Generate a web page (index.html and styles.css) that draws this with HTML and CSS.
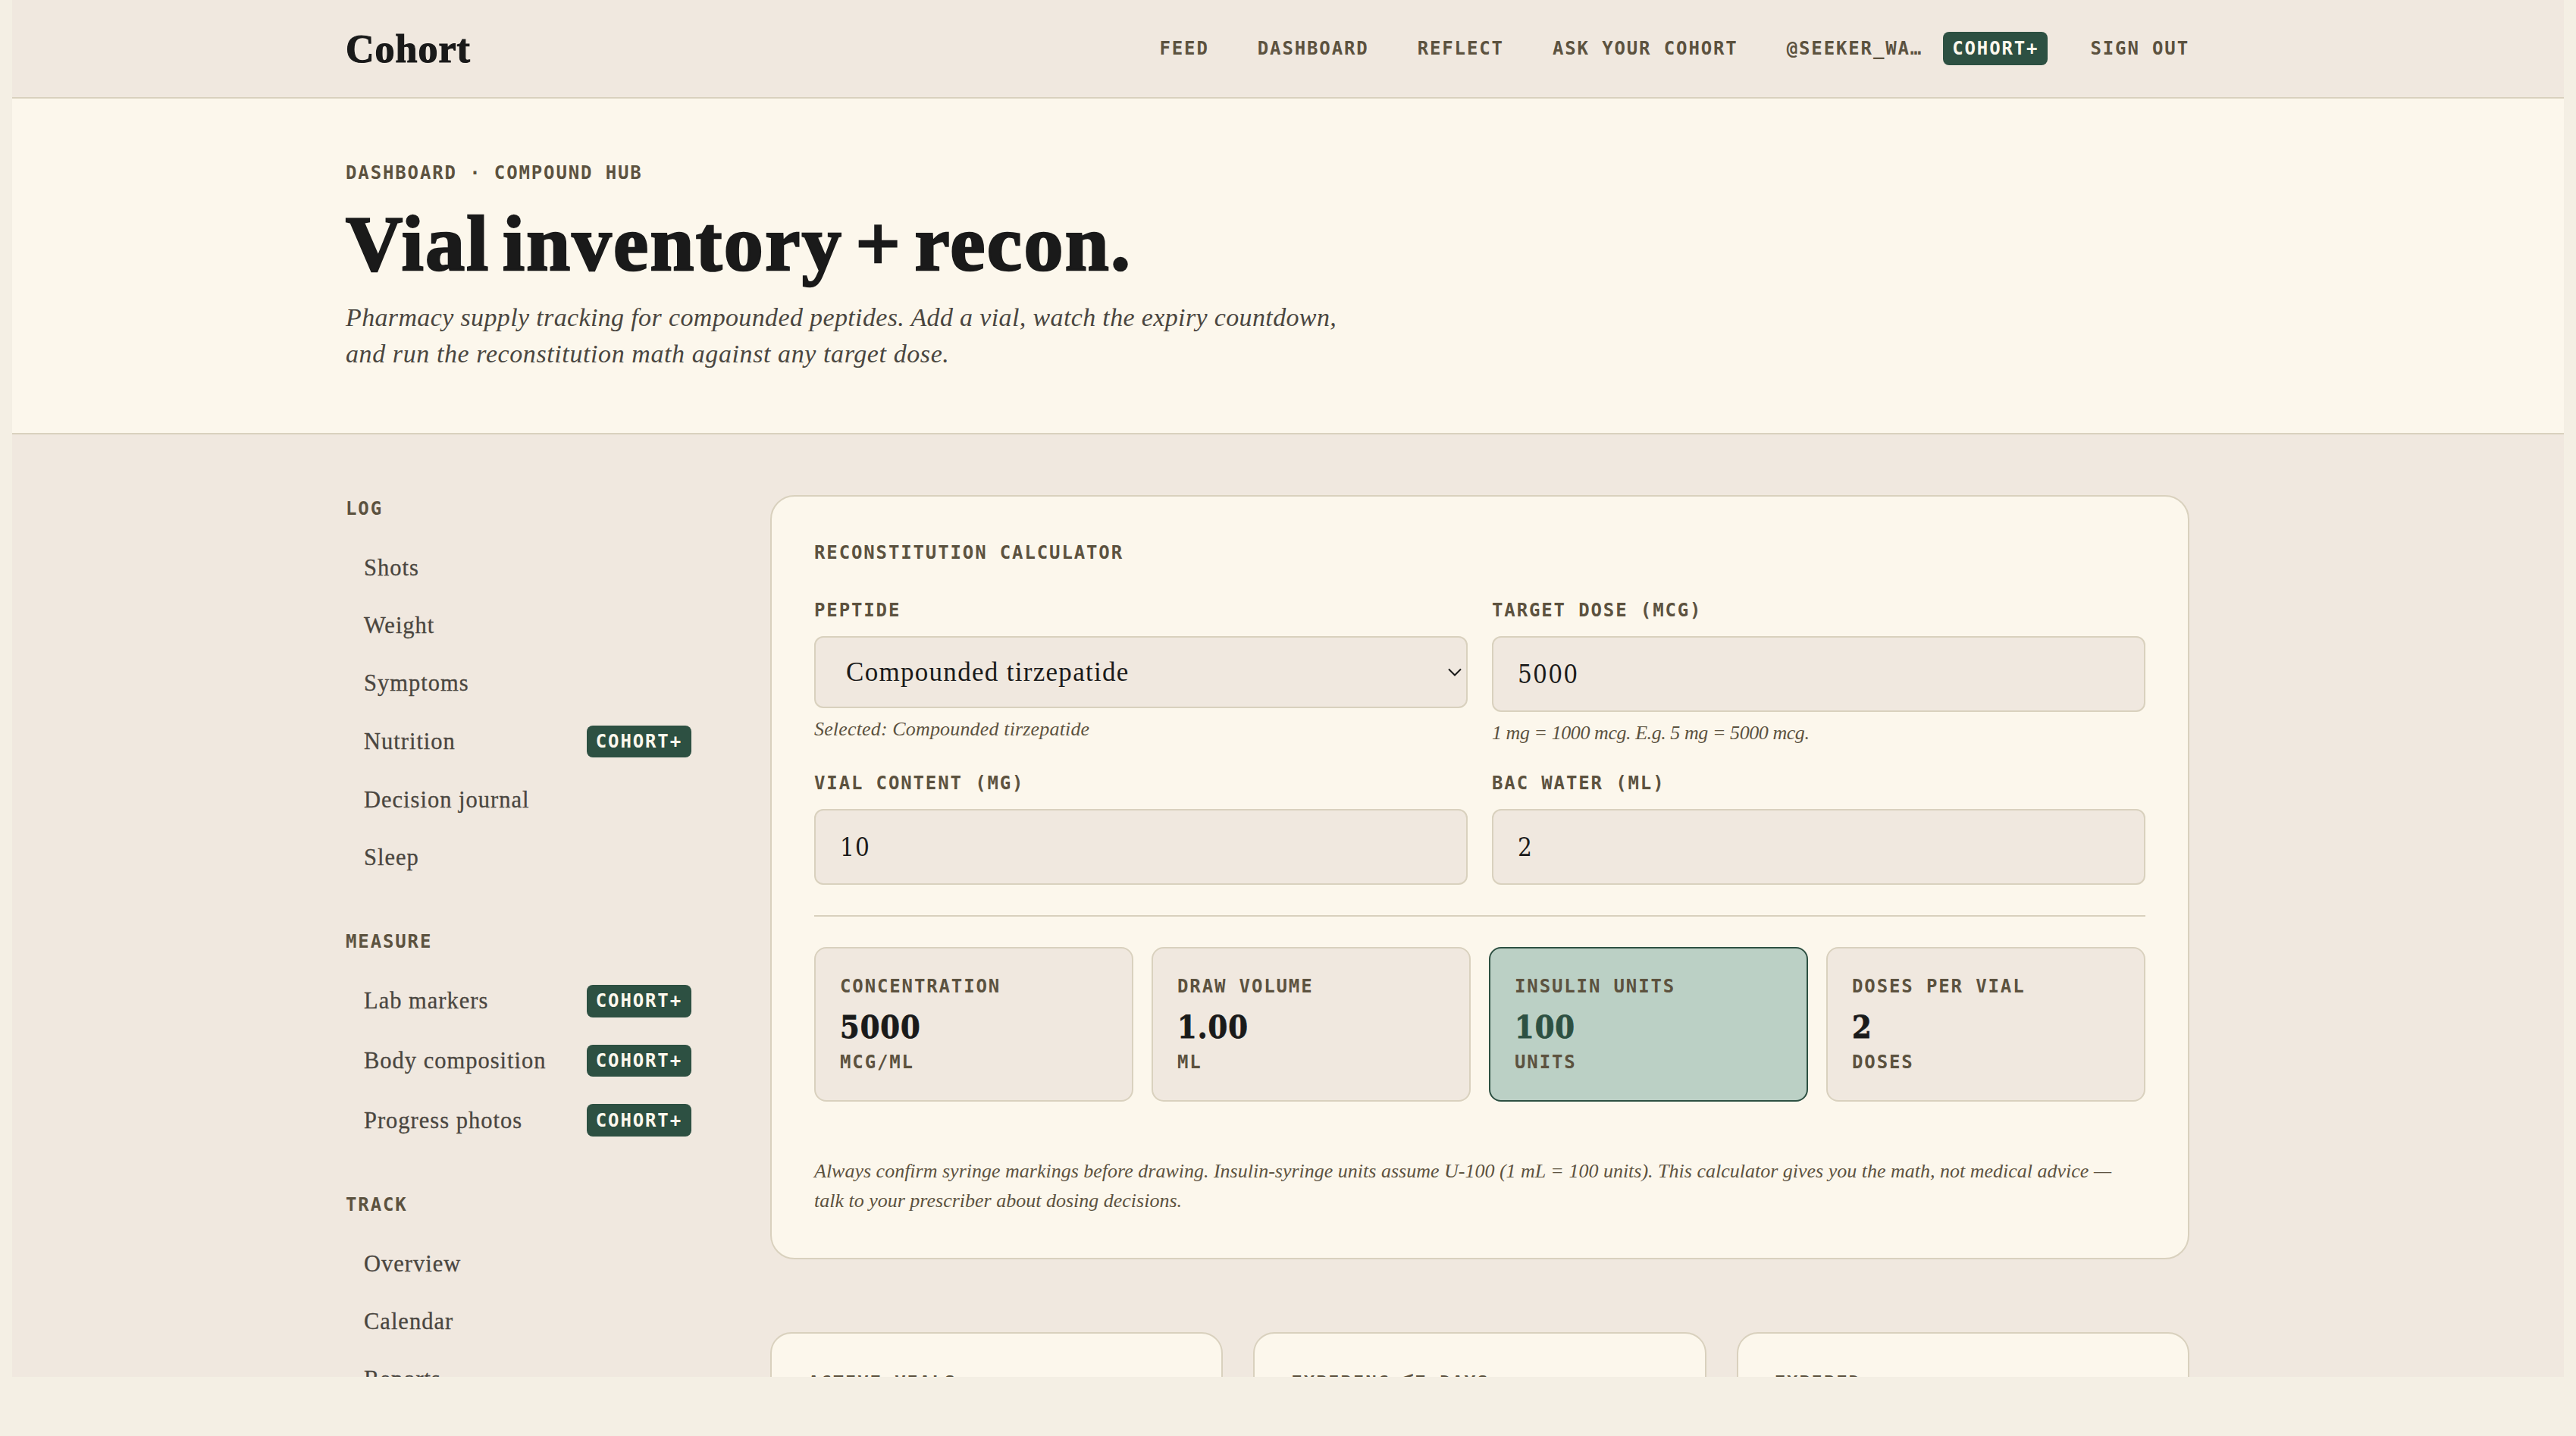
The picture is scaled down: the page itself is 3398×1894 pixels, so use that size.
FILE: index.html
```html
<!DOCTYPE html>
<html lang="en">

    <head>
        <meta charset="UTF-8">
        <meta name="viewport" content="width=device-width, initial-scale=1.0">
        <title>Cohort - Compound hub</title>

        <link rel="stylesheet" href="styles.css">
    </head>

    <body>
        <div class="page">
            <header class="topbar">
                <div class="container topbar-inner">
                    <a class="logo">Cohort</a>
                    <nav class="nav">
                        <a>Feed</a>
                        <a>Dashboard</a>
                        <a>Reflect</a>
                        <a>Ask your cohort</a>
                        <div class="account">
                            <a>@seeker_wa…</a>
                            <span class="badge">Cohort+</span>
                        </div>
                        <a class="sign-out">Sign out</a>
                    </nav>
                </div>
            </header>

            <section class="hero">
                <div class="container">
                    <p class="label">Dashboard · Compound hub</p>
                    <h1>Vial inventory + recon.</h1>
                    <p class="lede">Pharmacy supply tracking for compounded peptides. Add a vial, watch the expiry countdown,<br><span class="lede-end">and run the reconstitution math against any target dose.</span></p>
                </div>
            </section>

            <main class="container layout">
                <aside class="sidebar">
                    <div class="group">
                        <p class="label">Log</p>
                        <ul>
                            <li><a>Shots</a></li>
                            <li><a>Weight</a></li>
                            <li><a>Symptoms</a></li>
                            <li><a>Nutrition</a><span class="badge">Cohort+</span></li>
                            <li><a>Decision journal</a></li>
                            <li><a>Sleep</a></li>
                        </ul>
                    </div>
                    <div class="group">
                        <p class="label">Measure</p>
                        <ul>
                            <li><a>Lab markers</a><span class="badge">Cohort+</span></li>
                            <li><a>Body composition</a><span class="badge">Cohort+</span></li>
                            <li><a>Progress photos</a><span class="badge">Cohort+</span></li>
                        </ul>
                    </div>
                    <div class="group">
                        <p class="label">Track</p>
                        <ul>
                            <li><a>Overview</a></li>
                            <li><a>Calendar</a></li>
                            <li><a>Reports</a></li>
                        </ul>
                    </div>
                </aside>

                <div class="content">
                    <section class="card calculator">
                        <h2 class="label">Reconstitution calculator</h2>
                        <form class="fields">
                            <div class="field">
                                <label class="label" for="peptide">Peptide</label>
                                <div class="select">
                                    <select id="peptide">
                                        <option>Compounded tirzepatide</option>
                                    </select>
                                    <svg class="chevron" width="20" height="14" viewBox="0 0 20 14">
                                        <path d="M2 2.5 L10 10.5 L18 2.5" fill="none" stroke="currentColor" stroke-width="2" />
                                    </svg>
                                </div>
                                <p class="hint">Selected: Compounded tirzepatide</p>
                            </div>
                            <div class="field">
                                <label class="label" for="dose">Target dose (mcg)</label>
                                <input type="text" id="dose" value="5000">
                                <p class="hint hint-num">1 mg = 1000 mcg. E.g. 5 mg = 5000 mcg.</p>
                            </div>
                            <div class="field">
                                <label class="label" for="vial">Vial content (mg)</label>
                                <input type="text" id="vial" value="10">
                            </div>
                            <div class="field">
                                <label class="label" for="water">Bac water (mL)</label>
                                <input type="text" id="water" value="2">
                            </div>
                        </form>
                        <div class="results">
                            <div class="result">
                                <p class="label">Concentration</p>
                                <p class="value">5000</p>
                                <p class="label">mcg/mL</p>
                            </div>
                            <div class="result">
                                <p class="label">Draw volume</p>
                                <p class="value">1.00</p>
                                <p class="label">mL</p>
                            </div>
                            <div class="result highlight">
                                <p class="label">Insulin units</p>
                                <p class="value">100</p>
                                <p class="label">units</p>
                            </div>
                            <div class="result">
                                <p class="label">Doses per vial</p>
                                <p class="value">2</p>
                                <p class="label">doses</p>
                            </div>
                        </div>
                        <p class="disclaimer">Always confirm syringe markings before drawing. Insulin-syringe units assume U-100 (1 mL = 100 units). This calculator gives you the math, not medical advice —<br>talk to your prescriber about dosing decisions.</p>
                    </section>

                    <section class="summary">
                        <div class="card summary-card">
                            <p class="label">Active vials</p>
                        </div>
                        <div class="card summary-card">
                            <p class="label">Expiring <span class="sign">≤</span>7 days</p>
                        </div>
                        <div class="card summary-card">
                            <p class="label">Expired</p>
                        </div>
                    </section>
                </div>
            </main>
        </div>
    </body>

</html>
```
FILE: styles.css
```css
* {
    box-sizing: border-box;
}

body {
    margin: 0;
    background-color: #f4efe4;
    color: #1a1a1a;
    font-family: "Liberation Serif", serif;
}

h1,
h2,
p,
ul {
    margin: 0;
    padding: 0;
}

.page {
    height: 1816px;
    margin: 0 16px;
    background-color: #f0e8df;
    overflow: hidden;
}

.container {
    width: 2432px;
    margin-left: 440px;
}

/* small mono caps used for every label */
.label,
.nav,
.badge {
    font-family: "DejaVu Sans Mono", monospace;
    font-size: 24px;
    font-weight: bold;
    line-height: 36px;
    letter-spacing: 1.87px;
    text-transform: uppercase;
    white-space: nowrap;
    color: #5c523f;
}

.badge {
    padding: 3px 12px;
    border-radius: 8px;
    background-color: #2d5042;
    color: #fcf7ec;
}

.topbar {
    height: 130px;
    border-bottom: 2px solid #d9d1be;
}

.topbar-inner {
    display: flex;
    align-items: center;
    justify-content: space-between;
    height: 128px;
}

.logo {
    font-size: 52px;
    font-weight: bold;
    letter-spacing: 1px;
    -webkit-text-stroke: 1.2px currentColor;
}

.nav {
    display: flex;
    align-items: center;
    gap: 64px;
}

.account {
    display: flex;
    align-items: center;
    gap: 27px;
}

.account .badge {
    padding: 4px 12px;
}

.sign-out {
    margin-left: -8px;
}

.hero {
    height: 443px;
    padding-top: 80px;
    background-color: #fcf7ec;
    border-bottom: 2px solid #d9d1be;
}

.hero h1 {
    margin: 22px 0;
    font-size: 104px;
    line-height: 105px;
    letter-spacing: 2.4px;
    word-spacing: -12px;
    -webkit-text-stroke: 2.6px currentColor;
}

.lede {
    font-size: 34px;
    font-style: italic;
    line-height: 48px;
    letter-spacing: 0.36px;
    white-space: nowrap;
    color: #4a4640;
}

.lede-end {
    letter-spacing: 0.59px;
}

.layout {
    display: grid;
    grid-template-columns: 480px 1872px;
    gap: 80px;
    padding-top: 80px;
}

.sidebar {
    display: flex;
    flex-direction: column;
    gap: 56.5px;
}

.group ul {
    display: flex;
    flex-direction: column;
    gap: 4px;
    margin-top: 23.5px;
    list-style: none;
}

.group li {
    display: flex;
    align-items: center;
    justify-content: space-between;
    min-height: 72px;
    padding: 16px 24px;
    font-size: 30.5px;
    line-height: 40px;
    letter-spacing: 1px;
    color: #4a4640;
    -webkit-text-stroke: 0.3px currentColor;
}

.group .badge {
    padding: 3.3px 12px;
    letter-spacing: 1.87px;
    -webkit-text-stroke: 0;
}

.card {
    background-color: #fcf7ec;
    border: 2px solid #d9d1be;
    border-radius: 32px;
}

.calculator {
    height: 1008px;
    padding: 56px;
}

.fields {
    display: grid;
    grid-template-columns: 1fr 1fr;
    gap: 29px 32px;
    margin-top: 40px;
    padding-bottom: 40px;
    border-bottom: 2px solid #d9d1be;
}

.field .label {
    display: block;
    margin-bottom: 16px;
}

.field input,
.field select {
    display: block;
    width: 100%;
    height: 100px;
    padding: 0 32px;
    border: 2px solid #d9d1be;
    border-radius: 12px;
    background-color: #f0e8df;
    color: #1a1a1a;
    font-family: "DejaVu Serif Condensed", "DejaVu Serif", serif;
    font-size: 33px;
    letter-spacing: 1.2px;
}

.field select {
    appearance: none;
    height: 95px;
    padding: 0 40px;
    font-family: "Liberation Serif", serif;
    font-size: 35px;
    letter-spacing: 1.3px;
}

.select {
    position: relative;
}

.chevron {
    position: absolute;
    right: 7px;
    top: 41px;
}

.hint {
    margin-top: 9px;
    font-size: 26px;
    font-style: italic;
    line-height: 38px;
    letter-spacing: 0.16px;
    color: #5c523f;
}

.hint-num {
    letter-spacing: -0.44px;
}

.results {
    display: grid;
    grid-template-columns: repeat(4, 1fr);
    gap: 24px;
    margin-top: 40px;
}

.result {
    height: 204px;
    padding: 32px;
    border: 2px solid #d9d1be;
    border-radius: 16px;
    background-color: #f0e8df;
}

.value {
    margin: 14px 0 6px;
    font-family: "DejaVu Serif Condensed", "DejaVu Serif", serif;
    font-size: 41px;
    font-weight: bold;
    line-height: 44px;
    letter-spacing: 1px;
    -webkit-text-stroke: 0.8px currentColor;
}

.highlight {
    background-color: #bbd0c5;
    border-color: #2d5042;
}

.highlight .value {
    color: #2d5042;
}

.disclaimer {
    margin-top: 72px;
    font-size: 26px;
    font-style: italic;
    line-height: 39px;
    white-space: nowrap;
    color: #5c523f;
}

.summary {
    display: grid;
    grid-template-columns: repeat(3, 1fr);
    gap: 40px;
    margin-top: 96px;
}

.summary-card {
    height: 220px;
    padding: 47px 48px;
    border-radius: 28px;
}

.sign {
    line-height: 0;
    vertical-align: 6px;
}
```
